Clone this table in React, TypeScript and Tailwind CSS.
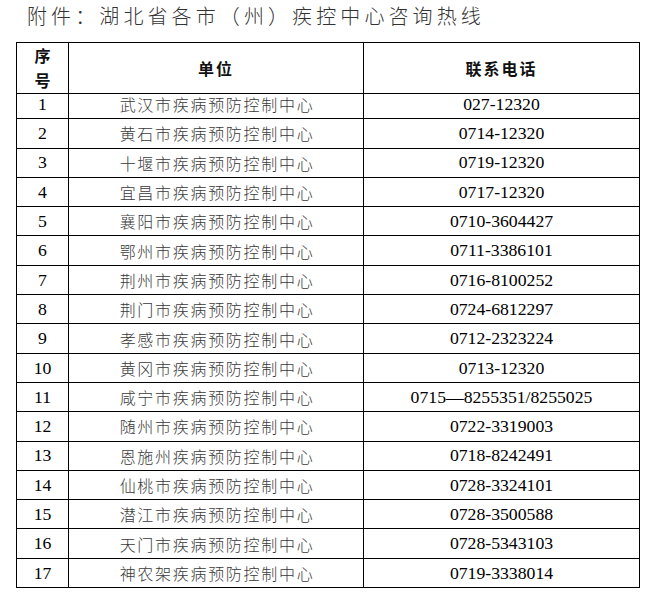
import React from "react";

const rows: [string, string][] = [
  ["武汉市疾病预防控制中心", "027-12320"],
  ["黄石市疾病预防控制中心", "0714-12320"],
  ["十堰市疾病预防控制中心", "0719-12320"],
  ["宜昌市疾病预防控制中心", "0717-12320"],
  ["襄阳市疾病预防控制中心", "0710-3604427"],
  ["鄂州市疾病预防控制中心", "0711-3386101"],
  ["荆州市疾病预防控制中心", "0716-8100252"],
  ["荆门市疾病预防控制中心", "0724-6812297"],
  ["孝感市疾病预防控制中心", "0712-2323224"],
  ["黄冈市疾病预防控制中心", "0713-12320"],
  ["咸宁市疾病预防控制中心", "0715—8255351/8255025"],
  ["随州市疾病预防控制中心", "0722-3319003"],
  ["恩施州疾病预防控制中心", "0718-8242491"],
  ["仙桃市疾病预防控制中心", "0728-3324101"],
  ["潜江市疾病预防控制中心", "0728-3500588"],
  ["天门市疾病预防控制中心", "0728-5343103"],
  ["神农架疾病预防控制中心", "0719-3338014"],
];

const cjk = "font-['Noto_Sans_CJK_SC',sans-serif]";
const serif = "font-['Liberation_Serif','Noto_Sans_CJK_SC',serif]";

export default function App() {
  return (
    <div className="w-[659px] h-[598px] bg-white overflow-hidden">
      <div
        className={`pt-[4px] pl-[27px] leading-[24px] text-[20px] tracking-[4.1px] font-light text-[#333] ${cjk}`}
      >
        附件：湖北省各市（州）疾控中心咨询热线
      </div>
      <div className="mt-[14px] ml-[16px] w-[624px] border-l border-t border-black">
        <div className="grid grid-cols-[52px_295px_276px] h-[47px]">
          <div
            className={`border-r border-b border-black flex flex-col items-center justify-center font-bold text-[16px] leading-[25px] text-[#111] ${cjk}`}
          >
            <span>序</span>
            <span>号</span>
          </div>
          <div
            className={`border-r border-b border-black flex items-center justify-center font-bold text-[16px] tracking-[2px] text-[#111] ${cjk}`}
          >
            单位
          </div>
          <div
            className={`border-r border-b border-black flex items-center justify-center font-bold text-[16px] tracking-[2px] text-[#111] ${cjk}`}
          >
            联系电话
          </div>
        </div>
        {rows.map(([name, phone], i) => (
          <div key={i} className="grid grid-cols-[52px_295px_276px] h-[29.3px]">
            <div
              className={`border-r border-b border-black flex items-center justify-center text-[17.7px] text-black ${serif}`}
            >
              {i + 1}
            </div>
            <div
              className={`border-r border-b border-black flex items-center justify-center pl-[2px] text-[16px] tracking-[1.7px] font-light text-[#3a3a3a] ${cjk}`}
            >
              {name}
            </div>
            <div
              className={`border-r border-b border-black flex items-center justify-center text-[17.7px] text-black ${serif}`}
            >
              {phone}
            </div>
          </div>
        ))}
      </div>
    </div>
  );
}
